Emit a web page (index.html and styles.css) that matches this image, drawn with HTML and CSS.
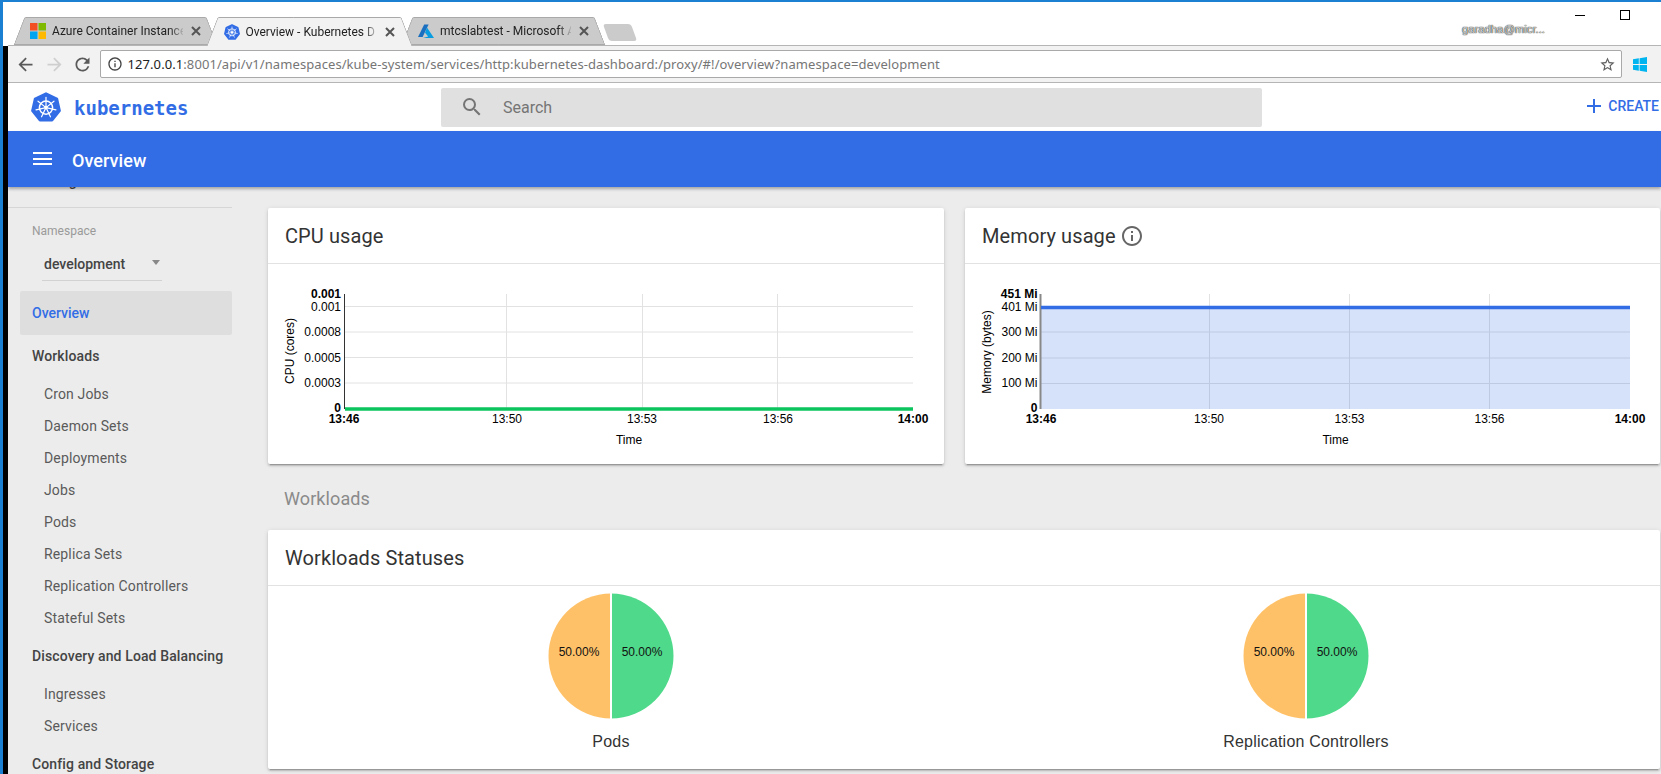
FILE: index.html
```html
<!DOCTYPE html>
<html lang="en">
<head>
<meta charset="utf-8">
<title>Overview - Kubernetes Dashboard</title>
<link rel="stylesheet" href="styles.css">
</head>
<body>
<svg class="defs" width="0" height="0" aria-hidden="true">
  <symbol id="k8s" viewBox="0 0 100 100">
    <polygon points="50,5 86.6,22.6 95.6,62.2 70.3,94 29.7,94 4.4,62.2 13.4,22.6" fill="#326de6" stroke="#326de6" stroke-width="8" stroke-linejoin="round"/>
    <circle cx="50" cy="52" r="22" fill="none" stroke="#fff" stroke-width="5"/>
    <circle cx="50" cy="52" r="6" fill="#fff"/>
    <g stroke="#fff" stroke-width="4" stroke-linecap="round">
      <line x1="50" y1="52" x2="50" y2="18"/>
      <line x1="50" y1="52" x2="76.6" y2="30.8"/>
      <line x1="50" y1="52" x2="83.2" y2="59.6"/>
      <line x1="50" y1="52" x2="64.8" y2="82.6"/>
      <line x1="50" y1="52" x2="35.2" y2="82.6"/>
      <line x1="50" y1="52" x2="16.8" y2="59.6"/>
      <line x1="50" y1="52" x2="23.4" y2="30.8"/>
    </g>
  </symbol>
  <symbol id="x" viewBox="0 0 10 10">
    <path d="M1 1l8 8M9 1l-8 8" stroke="currentColor" stroke-width="2" fill="none"/>
  </symbol>
  <symbol id="info" viewBox="0 0 24 24">
    <path fill="currentColor" d="M11 7h2v2h-2zm0 4h2v6h-2zm1-9C6.48 2 2 6.48 2 12s4.48 10 10 10 10-4.48 10-10S17.52 2 12 2zm0 18c-4.41 0-8-3.59-8-8s3.59-8 8-8 8 3.59 8 8-3.59 8-8 8z"/>
  </symbol>
</svg>

<div class="tabstrip">
  <div class="tab">
    <svg class="favicon" viewBox="0 0 16 16"><rect width="7.5" height="7.5" fill="#f25022"/><rect x="8.5" width="7.5" height="7.5" fill="#7fba00"/><rect y="8.5" width="7.5" height="7.5" fill="#00a4ef"/><rect x="8.5" y="8.5" width="7.5" height="7.5" fill="#ffb900"/></svg>
    <span class="tab-title">Azure Container Instance</span>
    <svg class="tab-close"><use href="#x"/></svg>
  </div>
  <div class="tab tab-active">
    <svg class="favicon"><use href="#k8s"/></svg>
    <span class="tab-title">Overview - Kubernetes D</span>
    <svg class="tab-close"><use href="#x"/></svg>
  </div>
  <div class="tab">
    <svg class="favicon" viewBox="0 0 16 16"><path d="M6.2 1.5h4.4L4.6 14H0z" fill="#1a6fc0"/><path d="M9 4.5L16 15H5l5.2-1.4L7 9.8z" fill="#0a9ce0"/></svg>
    <span class="tab-title">mtcslabtest - Microsoft A</span>
    <svg class="tab-close"><use href="#x"/></svg>
  </div>
  <div class="newtab"></div>
  <div class="account">garadha@micr...</div>
  <div class="winctl">
    <span class="win-min"></span>
    <span class="win-max"></span>
  </div>
</div>

<div class="stage">
  <div class="blackbar"></div>
  <div class="app">
    <div class="toolbar">
      <svg class="tool" viewBox="0 0 24 24"><path fill="#5a5a5a" d="M20 11H7.83l5.59-5.59L12 4l-8 8 8 8 1.41-1.41L7.83 13H20v-2z"/></svg>
      <svg class="tool" viewBox="0 0 24 24"><path fill="#cfcfcf" d="M12 4l-1.41 1.41L16.17 11H4v2h12.17l-5.58 5.59L12 20l8-8z"/></svg>
      <svg class="tool tool-last" viewBox="0 0 24 24"><path fill="#5a5a5a" d="M17.65 6.35A7.958 7.958 0 0 0 12 4c-4.42 0-7.99 3.58-7.99 8s3.57 8 7.99 8c3.73 0 6.84-2.55 7.73-6h-2.08A5.99 5.99 0 0 1 12 18c-3.31 0-6-2.69-6-6s2.69-6 6-6c1.66 0 3.14.69 4.22 1.78L13 11h7V4l-2.35 2.35z"/></svg>
      <div class="omnibox">
        <svg class="omni-info"><use href="#info"/></svg>
        <span class="url"><span class="url-host">127.0.0.1</span>:8001/api/v1/namespaces/kube-system/services/http:kubernetes-dashboard:/proxy/#!/overview?namespace=development</span>
        <svg class="omni-star" viewBox="0 0 24 24"><path fill="#5f5f5f" d="M22 9.24l-7.19-.62L12 2 9.19 8.63 2 9.24l5.46 4.73L5.82 21 12 17.27 18.18 21l-1.63-7.03L22 9.24zM12 15.4l-3.76 2.27 1-4.28-3.32-2.88 4.38-.38L12 6.1l1.71 4.04 4.38.38-3.32 2.88 1 4.28L12 15.4z"/></svg>
      </div>
      <svg class="winlogo" viewBox="0 0 14 15"><path fill="#00b4f0" d="M0 2.2l5.8-.9v5.8H0zM6.6 1.2L14 0v7.1H6.6zM0 7.9h5.8v5.8L0 12.8zM6.6 7.9H14V15l-7.4-1.2z"/></svg>
    </div>

    <header class="appbar">
      <div class="brand">
        <svg class="brand-logo"><use href="#k8s"/></svg>
        <span class="brand-name">kubernetes</span>
      </div>
      <div class="search">
        <svg class="search-icon" viewBox="0 0 24 24"><path fill="#757575" d="M15.5 14h-.79l-.28-.27A6.471 6.471 0 0 0 16 9.5 6.5 6.5 0 1 0 9.5 16c1.61 0 3.09-.59 4.23-1.57l.27.28v.79l5 4.99L20.49 19l-4.99-5zm-6 0C7.01 14 5 11.99 5 9.5S7.01 5 9.5 5 14 7.01 14 9.5 11.99 14 9.5 14z"/></svg>
        <span class="search-text">Search</span>
      </div>
      <div class="create">
        <svg class="create-plus" viewBox="0 0 14 14"><path d="M7 0v14M0 7h14" stroke="#326de6" stroke-width="2"/></svg>
        <span>CREATE</span>
      </div>
    </header>

    <div class="titlebar">
      <div class="menu"><span></span><span></span><span></span></div>
      <div class="titlebar-text">Overview</div>
    </div>

    <div class="workspace">
      <nav class="sidebar">
        <div class="nav-clipped">Settings</div>
        <div class="nav-divider"></div>
        <div class="ns-label">Namespace</div>
        <div class="ns-select"><span>development</span><i class="ns-arrow"></i></div>
        <div class="nav-active">Overview</div>

        <div class="nav-group nav-group-first">
          <div class="nav-head">Workloads</div>
          <div class="nav-items">
            <div class="nav-item">Cron Jobs</div>
            <div class="nav-item">Daemon Sets</div>
            <div class="nav-item">Deployments</div>
            <div class="nav-item">Jobs</div>
            <div class="nav-item">Pods</div>
            <div class="nav-item">Replica Sets</div>
            <div class="nav-item">Replication Controllers</div>
            <div class="nav-item">Stateful Sets</div>
          </div>
        </div>
        <div class="nav-group">
          <div class="nav-head">Discovery and Load Balancing</div>
          <div class="nav-items">
            <div class="nav-item">Ingresses</div>
            <div class="nav-item">Services</div>
          </div>
        </div>
        <div class="nav-group nav-group-last">
          <div class="nav-head">Config and Storage</div>
        </div>
      </nav>

      <main class="content">
        <div class="chart-row">
          <section class="card">
            <div class="card-head"><h2 class="card-title">CPU usage</h2></div>
            <svg class="chart" viewBox="268 264 676 200">
              <g class="grid">
                <path d="M345 306.5H913M345 332H913M345 357.5H913M345 383H913M506.5 294V409M642.5 294V409M777.5 294V409"/>
              </g>
              <path class="axis" d="M344.5 294V409"/>
              <path class="line-green" d="M345 409H913"/>
              <g class="tick tick-y-cpu">
                <text class="bold" x="341" y="298">0.001</text>
                <text x="341" y="311">0.001</text>
                <text x="341" y="336">0.0008</text>
                <text x="341" y="362">0.0005</text>
                <text x="341" y="387">0.0003</text>
                <text class="bold" x="341" y="412">0</text>
              </g>
              <g class="tick tick-x">
                <text class="bold" x="344" y="423">13:46</text>
                <text x="507" y="423">13:50</text>
                <text x="642" y="423">13:53</text>
                <text x="778" y="423">13:56</text>
                <text class="bold" x="913" y="423">14:00</text>
                <text x="629" y="444">Time</text>
                <text transform="rotate(-90 294 351)" x="294" y="351">CPU (cores)</text>
              </g>
            </svg>
          </section>
          <section class="card">
            <div class="card-head">
              <h2 class="card-title">Memory usage</h2>
              <svg class="card-info"><use href="#info"/></svg>
            </div>
            <svg class="chart" viewBox="965 264 695 200">
              <g class="grid">
                <path d="M1041 332H1630M1041 358H1630M1041 383.5H1630M1209.5 294V409M1349.5 294V409M1489.5 294V409"/>
              </g>
              <rect class="area" x="1041" y="307.5" width="589" height="101.5"/>
              <path class="axis-mem" d="M1040.5 294V409"/>
              <path class="line-blue" d="M1041 307.5H1630"/>
              <g class="tick tick-y-mem">
                <text class="bold" x="1037.5" y="298">451 Mi</text>
                <text x="1037.5" y="311">401 Mi</text>
                <text x="1037.5" y="336">300 Mi</text>
                <text x="1037.5" y="362">200 Mi</text>
                <text x="1037.5" y="387">100 Mi</text>
                <text class="bold" x="1037.5" y="412">0</text>
              </g>
              <g class="tick tick-x">
                <text class="bold" x="1041" y="423">13:46</text>
                <text x="1209" y="423">13:50</text>
                <text x="1349.5" y="423">13:53</text>
                <text x="1489.5" y="423">13:56</text>
                <text class="bold" x="1630" y="423">14:00</text>
                <text x="1335.5" y="444">Time</text>
                <text transform="rotate(-90 991 352)" x="991" y="352">Memory (bytes)</text>
              </g>
            </svg>
          </section>
        </div>

        <h3 class="section-title">Workloads</h3>

        <section class="card statuses">
          <div class="card-head"><h2 class="card-title">Workloads Statuses</h2></div>
          <div class="pies">
            <div class="pie-cell">
              <svg class="pie" viewBox="-63 -63 126 126">
                <path class="pie-orange" d="M0 -62.5A62.5 62.5 0 0 0 0 62.5Z"/>
                <path class="pie-green" d="M0 -62.5A62.5 62.5 0 0 1 0 62.5Z"/>
                <path class="pie-gap" d="M0 -63V63"/>
                <text x="-32" y="-0.5">50.00%</text>
                <text x="31" y="-0.5">50.00%</text>
              </svg>
              <div class="pie-label">Pods</div>
            </div>
            <div class="pie-cell">
              <svg class="pie" viewBox="-63 -63 126 126">
                <path class="pie-orange" d="M0 -62.5A62.5 62.5 0 0 0 0 62.5Z"/>
                <path class="pie-green" d="M0 -62.5A62.5 62.5 0 0 1 0 62.5Z"/>
                <path class="pie-gap" d="M0 -63V63"/>
                <text x="-32" y="-0.5">50.00%</text>
                <text x="31" y="-0.5">50.00%</text>
              </svg>
              <div class="pie-label">Replication Controllers</div>
            </div>
          </div>
        </section>
      </main>
    </div>
  </div>
</div>
</body>
</html>
```
FILE: styles.css
```css
* { box-sizing: border-box; }
html, body { margin: 0; height: 774px; overflow: hidden; }
body {
  background: #fff;
  border-top: 2px solid #1b80d2;
  border-left: 3px solid #1b80d2;
  font-family: Roboto, "Liberation Sans", sans-serif;
  display: flex;
  flex-direction: column;
}
.defs { position: absolute; }

/* browser tab strip */
.tabstrip {
  height: 43px;
  flex: none;
  display: flex;
  align-items: flex-end;
  padding-left: 10px;
  position: relative;
  z-index: 2;
}
.tab {
  width: 205px;
  height: 28px;
  margin-right: -11.5px;
  display: flex;
  align-items: center;
  padding-left: 17px;
  position: relative;
  isolation: isolate;
  font-family: Roboto, sans-serif;
  font-size: 12px;
  color: #222;
}
.tab::before, .tab::after {
  content: "";
  position: absolute;
  top: 0;
  bottom: 0;
  z-index: -1;
  background: #cbcbcb;
  border-top: 1px solid #a9a9a9;
  border-bottom: 1px solid #a9a9a9;
}
.tab::before {
  left: 5.5px;
  right: 45%;
  border-left: 1px solid #a9a9a9;
  border-top-left-radius: 2px;
  transform: skewX(-21deg);
}
.tab::after {
  left: 45%;
  right: 5.5px;
  border-right: 1px solid #a9a9a9;
  border-top-right-radius: 2px;
  transform: skewX(21deg);
}
.tab-active {
  z-index: 3;
  width: 206px;
  height: 29px;
  margin-bottom: -1px;
}
.tab-active::before, .tab-active::after {
  background: #f2f2f2;
  border-bottom: 0;
}
.favicon { width: 16px; height: 16px; flex: none; margin-right: 6px; }
.tab-title {
  width: 131px;
  flex: none;
  white-space: nowrap;
  -webkit-mask-image: linear-gradient(to right, #000 90%, rgba(0,0,0,.15) 100%);
  mask-image: linear-gradient(to right, #000 90%, rgba(0,0,0,.15) 100%);
}
.tab-close { width: 10px; height: 10px; flex: none; margin-left: 8px; color: #555; }
.newtab {
  width: 28px;
  height: 17px;
  margin: 0 0 4px 11px;
  background: #cbcbcb;
  border-radius: 3px;
  transform: skewX(20deg);
}
.account {
  margin-left: auto;
  align-self: flex-start;
  margin-top: 21px;
  font-family: "Liberation Sans", sans-serif;
  font-size: 11.3px;
  color: #d8d8d8;
  text-shadow: 0 0 1px #222, 0 0 1px #222;
}
.winctl {
  align-self: flex-start;
  display: flex;
  align-items: center;
  width: 116px;
  padding: 8px 0 0 30px;
  gap: 35px;
}
.win-min { width: 10px; height: 1px; background: #000; }
.win-max { width: 10px; height: 10px; border: 1px solid #000; }

/* stage under the strip */
.stage { flex: 1; min-height: 0; display: flex; }
.blackbar { width: 5px; flex: none; margin-top: 1px; background: #000; }
.app { flex: 1; min-width: 0; display: flex; flex-direction: column; }

/* browser toolbar */
.toolbar {
  height: 38px;
  flex: none;
  display: flex;
  align-items: center;
  background: #f2f2f2;
  border-top: 1px solid #b5b5b5;
  border-bottom: 1px solid #b5b5b5;
  padding-left: 7px;
}
.tool { width: 21px; height: 21px; flex: none; margin-right: 7.5px; }
.tool-last { margin-right: 6.5px; }
.omnibox {
  width: 1522px;
  height: 28px;
  flex: none;
  display: flex;
  align-items: center;
  background: #fff;
  border: 1px solid #a9a9a9;
  border-radius: 2px;
  padding: 0 5px 0 6px;
}
.omni-info { width: 16px; height: 16px; flex: none; color: #444; margin-right: 5px; }
.url {
  font-family: "Noto Sans", sans-serif;
  font-size: 13px;
  letter-spacing: .08px;
  color: #767676;
  white-space: nowrap;
}
.url-host { color: #222; }
.omni-star { width: 17px; height: 17px; margin-left: auto; }
.winlogo { width: 14px; height: 15px; flex: none; margin-left: 11px; }

/* dashboard app bar */
.appbar {
  height: 48px;
  flex: none;
  display: flex;
  align-items: center;
  background: #fff;
}
.brand { width: 433px; flex: none; display: flex; align-items: center; padding-left: 23px; }
.brand-logo { width: 30px; height: 30px; flex: none; margin-right: 13px; }
.brand-name {
  font-family: "DejaVu Sans Mono", monospace;
  font-weight: 700;
  font-size: 19px;
  color: #326de6;
  margin-top: 1px;
}
.search {
  width: 821px;
  height: 39px;
  flex: none;
  display: flex;
  align-items: center;
  background: #e0e0e0;
  border-radius: 2px;
  padding-left: 19px;
}
.search-icon { width: 24px; height: 24px; margin-right: 19px; }
.search-text { font-size: 16px; color: #757575; }
.create {
  margin-left: auto;
  display: flex;
  align-items: center;
  padding-right: 2px;
  margin-top: -3px;
  font-size: 14px;
  font-weight: 500;
  color: #326de6;
}
.create-plus { width: 14px; height: 14px; margin-right: 7px; }

/* title bar */
.titlebar {
  height: 56px;
  flex: none;
  display: flex;
  align-items: center;
  background: #326de6;
  padding-left: 25px;
  position: relative;
  z-index: 1;
  box-shadow: 0 2px 3px rgba(0,0,0,.3);
}
.menu { width: 19px; display: flex; flex-direction: column; gap: 3.5px; margin-right: 20px; margin-top: -1px; }
.menu span { height: 2px; background: #fff; }
.titlebar-text { font-size: 18px; font-weight: 500; color: #fff; margin-top: 2px; letter-spacing: .05px; }

/* workspace */
.workspace { flex: 1; min-height: 0; display: flex; background: #ececec; overflow: hidden; }

.sidebar { width: 224px; flex: none; }
.nav-clipped {
  margin-top: -16px;
  padding-left: 24px;
  height: 20px;
  line-height: 20px;
  font-size: 14px;
  font-weight: 500;
  color: #444;
}
.nav-divider { height: 1px; margin-top: 16px; background: #d6d6d6; }
.ns-label {
  margin: 15px 0 0 24px;
  height: 16px;
  line-height: 16px;
  font-size: 12px;
  color: #9a9a9a;
}
.ns-select {
  margin: 8px 0 0 34px;
  width: 120px;
  height: 34px;
  padding: 1px 2px 0 2px;
  display: flex;
  align-items: center;
  justify-content: space-between;
  border-bottom: 1px solid #d2d2d2;
  font-size: 14px;
  font-weight: 500;
  color: #444;
}
.ns-arrow {
  width: 0;
  height: 0;
  margin-top: -4px;
  border-left: 4.5px solid transparent;
  border-right: 4.5px solid transparent;
  border-top: 5px solid #888;
}
.nav-active {
  margin: 10px 0 0 12px;
  height: 44px;
  line-height: 44px;
  padding-left: 12px;
  border-radius: 2px;
  background: #dedede;
  font-size: 14px;
  font-weight: 500;
  color: #326de6;
}
.nav-group { margin-top: 2px; }
.nav-group-first { margin-top: 1px; }
.nav-head {
  height: 40px;
  line-height: 40px;
  padding-left: 24px;
  font-size: 14px;
  font-weight: 500;
  letter-spacing: .12px;
  color: #444;
  white-space: nowrap;
}
.nav-items { margin-top: 2px; }
.nav-item {
  height: 32px;
  line-height: 32px;
  padding-left: 36px;
  font-size: 14px;
  letter-spacing: .14px;
  color: #5a5a5a;
  white-space: nowrap;
}

/* content */
.content { flex: 1; min-width: 0; padding: 21px 1px 0 36px; }
.chart-row { display: grid; grid-template-columns: 676px 1fr; gap: 21px; }
.card {
  background: #fff;
  border-radius: 2px;
  box-shadow: 0 2px 2px 0 rgba(0,0,0,.14), 0 3px 1px -2px rgba(0,0,0,.2), 0 1px 5px 0 rgba(0,0,0,.12);
}
.card-head {
  height: 56px;
  display: flex;
  align-items: center;
  gap: 4px;
  padding: 0 17px;
  border-bottom: 1px solid #e2e2e2;
}
.card-title { margin: 0; font-size: 20px; font-weight: 400; letter-spacing: .1px; color: #333; white-space: nowrap; }
.card-info { width: 24px; height: 24px; color: #666; }
.chart { display: block; width: 100%; height: 200px; }
.grid path { stroke: #e2e2e2; stroke-width: 1; fill: none; }
.axis { stroke: #333; stroke-width: 1; fill: none; }
.axis-mem { stroke: #888; stroke-width: 2; fill: none; }
.line-green { stroke: #0cc45e; stroke-width: 3.5; fill: none; }
.line-blue { stroke: #326de6; stroke-width: 3.5; fill: none; }
.area { fill: #326de6; fill-opacity: .2; }
.tick text { font-family: "Liberation Sans", sans-serif; font-size: 12px; fill: #000; }
.tick text.bold { font-weight: 700; }
.tick-x text { text-anchor: middle; }
.tick-y-cpu text, .tick-y-mem text { text-anchor: end; }

.section-title {
  margin: 0;
  height: 66px;
  line-height: 70px;
  padding-left: 16px;
  font-size: 18px;
  font-weight: 400;
  letter-spacing: .1px;
  color: #8a8a8a;
}
.statuses { height: 239px; }
.pies { display: grid; grid-template-columns: 686px 704px; }
.pie-cell { display: flex; flex-direction: column; align-items: center; padding-top: 7px; }
.pie { width: 126px; height: 126px; display: block; }
.pie-orange { fill: #ffc168; }
.pie-green { fill: #4fd98a; }
.pie-gap { stroke: #fff; stroke-width: 2; }
.pie text {
  font-family: "Liberation Sans", sans-serif;
  font-size: 12px;
  text-anchor: middle;
  fill: #111;
}
.pie-label {
  margin-top: 13px;
  font-family: "Liberation Sans", sans-serif;
  font-size: 16px;
  letter-spacing: .2px;
  line-height: 20px;
  color: #333;
}
```
